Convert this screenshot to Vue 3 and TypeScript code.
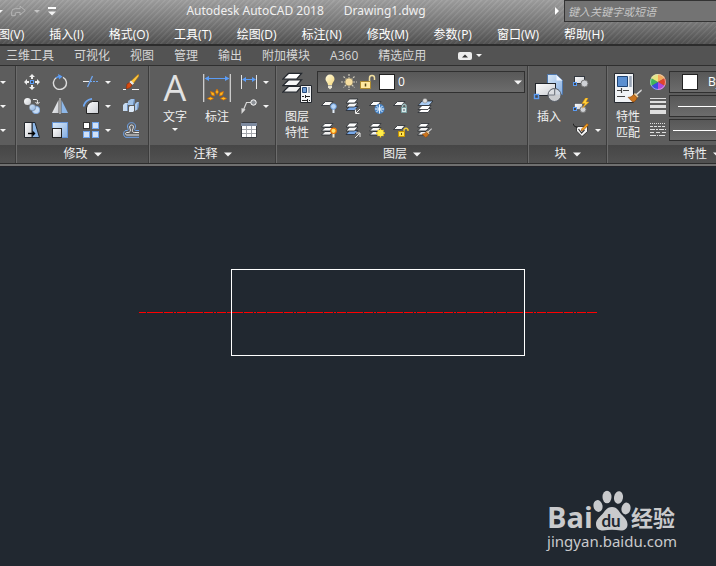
<script setup lang="ts">
import { ref } from 'vue'

interface Tool {
  icon: string
  label: string
  menu?: boolean
}

const menus: string[] = [
  '视图(V)', '插入(I)', '格式(O)', '工具(T)', '绘图(D)',
  '标注(N)', '修改(M)', '参数(P)', '窗口(W)', '帮助(H)',
]

const tabs: string[] = ['三维工具', '可视化', '视图', '管理', '输出', '附加模块', 'A360', '精选应用']

const modifyTools: Tool[] = [
  { icon: 'move', label: '移动' },
  { icon: 'rotate', label: '旋转' },
  { icon: 'trim', label: '修剪', menu: true },
  { icon: 'erase', label: '删除' },
  { icon: 'copy', label: '复制' },
  { icon: 'mirror', label: '镜像' },
  { icon: 'fillet', label: '圆角', menu: true },
  { icon: 'explode', label: '分解' },
  { icon: 'stretch', label: '拉伸' },
  { icon: 'scale', label: '缩放' },
  { icon: 'array', label: '阵列', menu: true },
  { icon: 'offset', label: '偏移' },
]

const noteTools: Tool[] = [
  { icon: 'linear', label: '线性', menu: true },
  { icon: 'leader', label: '引线', menu: true },
  { icon: 'table', label: '表格' },
]

const layerTools: Tool[] = [
  { icon: 'layer-off', label: '关闭' },
  { icon: 'layer-isolate', label: '隔离' },
  { icon: 'layer-freeze', label: '冻结' },
  { icon: 'layer-lock', label: '锁定' },
  { icon: 'layer-current', label: '置为当前' },
  { icon: 'layer-on', label: '打开所有图层' },
  { icon: 'layer-unisolate', label: '取消隔离' },
  { icon: 'layer-thaw', label: '解冻所有图层' },
  { icon: 'layer-unlock', label: '解锁' },
  { icon: 'layer-match', label: '匹配图层' },
]

const blockTools: Tool[] = [
  { icon: 'block-create', label: '创建' },
  { icon: 'block-edit', label: '编辑' },
  { icon: 'block-attr', label: '编辑属性', menu: true },
]

const search = ref('')
const layer = ref('0')
const color = ref('ByLayer')
</script>

<template>
  <div class="app">
    <svg class="sprite" aria-hidden="true">
      <defs>
        <linearGradient id="g-blue" x1="0" y1="0" x2="1" y2="1">
          <stop offset="0" stop-color="#dbe9f8" /><stop offset="1" stop-color="#86aee0" />
        </linearGradient>
        <linearGradient id="g-white" x1="0" y1="0" x2="1" y2="1">
          <stop offset="0" stop-color="#ffffff" /><stop offset="1" stop-color="#c9ccd2" />
        </linearGradient>
        <linearGradient id="g-bulb" x1="0" y1="0" x2="1" y2="1">
          <stop offset="0" stop-color="#fffbe0" /><stop offset="1" stop-color="#f5d77a" />
        </linearGradient>
      </defs>
      <symbol id="caret" viewBox="0 0 8 4"><path d="M0 0h8L4 4z" fill="#f4f4f4" /></symbol>
      <symbol id="move" viewBox="0 0 16 16">
        <path d="M8 0l3 3H9v2H7V3H5zM8 16l3-3H9v-2H7v2H5zM0 8l3-3v2h2v2H3v2zM16 8l-3-3v2h-2v2h2v2z" fill="#eee" />
        <rect x="6.500" y="6.500" width="3" height="3" fill="#3c4a5c" stroke="#5b9cf5" />
      </symbol>
      <symbol id="rotate" viewBox="0 0 16 16">
        <path d="M11 3.300A6.500 6.500 0 1 1 4.500 3.500" fill="none" stroke="#dcdcdc" stroke-width="1.400" />
        <path d="M4 4Q6 2 8.500 2.500" fill="none" stroke="#5b9cf5" stroke-width="1.500" />
        <path d="M6 0l4.500 2.500L7 5.500z" fill="#5b9cf5" />
      </symbol>
      <symbol id="trim" viewBox="0 0 16 16">
        <path d="M0 7.500h6" stroke="#ececec" />
        <path d="M7 7.500h9" stroke="#6fa6f0" stroke-dasharray="2 1" />
        <path d="M9.500 2L4.500 13" stroke="#6fa6f0" stroke-width="1.300" />
      </symbol>
      <symbol id="erase" viewBox="0 0 16 16">
        <path d="M0 15.500h3M9 15.500h7" stroke="#f4f4f4" />
        <path d="M15.500 0L16 2 10 10 7 8z" fill="#ffc940" stroke="#a36a10" stroke-width=".6" />
        <path d="M8 6.500l3 3-2 1.500-3-2.500z" fill="#e8e8e8" />
        <path d="M6.500 8.500l2.500 2.500c-1 3-4 3.500-6 3.500 1-1 .5-3.500 1-4.500z" fill="#d94d12" stroke="#8c2a05" stroke-width=".6" />
      </symbol>
      <symbol id="copy" viewBox="0 0 16 16">
        <circle cx="3.500" cy="3.500" r="3.500" fill="url(#g-white)" />
        <path d="M9 1.500h3.500q1 0 1 2v1.500M11.500 4l2 2.200 2-2.200" fill="none" stroke="#f0f0f0" />
        <circle cx="12" cy="12" r="3.800" fill="#c6dcf5" stroke="#7aa7e2" stroke-width=".8" />
        <circle cx="8.500" cy="9.500" r="3.200" fill="url(#g-blue)" stroke="#5e6a7a" stroke-width=".5" />
      </symbol>
      <symbol id="mirror" viewBox="0 0 16 16">
        <path d="M6.500 2v13H0z" fill="url(#g-white)" />
        <path d="M9.500 2v13H16z" fill="#8db7e8" />
        <path d="M8 0v16" stroke="#e4e4e4" />
      </symbol>
      <symbol id="fillet" viewBox="0 0 16 16">
        <path d="M3.500 15.500V10q1-5.500 6-6.500h6v12z" fill="url(#g-white)" stroke="#222" />
        <path d="M.5 8.500Q2 2 9 .8" fill="none" stroke="#6fa6f0" stroke-width="1.800" />
      </symbol>
      <symbol id="explode" viewBox="0 0 16 16">
        <path d="M5 3l3-2h4l-1 6H5z" fill="#9fc0e6" /><path d="M11 1l1 0-1 6-1 0z" fill="#5d82b4" />
        <path d="M0 7l2-2h3v7l-1 1H0z" fill="#c5daf1" /><path d="M4 7l1-2v7l-1 1z" fill="#6d92c4" />
        <path d="M6 9l1-1h4v5l-1 1H6z" fill="#dce9f8" />
        <path d="M12 6l2-2h2l-1 7-3 2z" fill="#a9c8ec" /><path d="M14.500 6L16 4l-1 7-1 .500z" fill="#6d92c4" />
      </symbol>
      <symbol id="stretch" viewBox="0 0 16 16">
        <path d="M8 .5h3l4.500 15H8z" fill="#8db7e8" stroke="#22262c" />
        <path d="M.5.5H8v15H.5z" fill="url(#g-white)" stroke="#22262c" />
        <path d="M4 11.500h6" stroke="#000" stroke-width="1.400" /><path d="M8.500 8.500l3 3-3 3z" />
      </symbol>
      <symbol id="scale" viewBox="0 0 16 16">
        <rect x=".5" y=".5" width="15" height="15" fill="url(#g-blue)" stroke="#6695d6" />
        <rect x=".5" y="6.500" width="9" height="9" fill="url(#g-white)" stroke="#222" />
      </symbol>
      <symbol id="array" viewBox="0 0 16 16">
        <rect x=".5" y=".5" width="6" height="6" fill="#fff" stroke="#333" />
        <g fill="#d1e2f8" stroke="#6fa6f0">
          <rect x="9.500" y=".5" width="6" height="6" /><rect x=".5" y="9.500" width="6" height="6" /><rect x="9.500" y="9.500" width="6" height="6" />
        </g>
      </symbol>
      <symbol id="offset" viewBox="0 0 16 16">
        <path d="M16 8.500h-3.500C11.500 8.500 11.500 7.500 12 6.500 13.500 2.500 11 .7 8.500.7S3.500 2.500 5 6.500c.5 1.500 0 2-1 2H3C0 8.500-.2 15 3 15.300h13" fill="none" stroke="#6fa6f0" />
        <path d="M16 10.500h-4.500c-2.500 0-2.500-2-1.500-4C11 4 10 3 8.700 3S6 4 7 6.500c1 2.500 0 4-2 4H4c-2 0-2 2.500 0 2.500h12" fill="none" stroke="#eee" />
      </symbol>
      <symbol id="dimension" viewBox="0 0 28 28">
        <path d="M.7 0v28M27.300 0v28" stroke="#d8d8d8" stroke-width="1.200" />
        <path d="M4 4.500h20" stroke="#5b9cf5" /><path d="M1.500 4.500L6 2v5zM26.500 4.500L22 2v5z" fill="#5b9cf5" />
        <g fill="#ffbd20" stroke="#d46a00" stroke-width=".7">
          <path d="M14 15l1.500 3L14 20.500 12.500 18zM7.500 17.500l3.500 1.200.5 3.300L8.500 21zM20.500 17.500L17 18.700l-.5 3.300 3-1zM4.500 24.500l3-1.500 3 1.500-3 1.500zM23.500 24.500l-3-1.500-3 1.500 3 1.500z" />
        </g>
      </symbol>
      <symbol id="linear" viewBox="0 0 16 16">
        <path d="M.5 1v14M15.500 1v14" stroke="#e4e4e4" />
        <path d="M3 5.500h10" stroke="#5b9cf5" /><path d="M1 5.500L5 3v5zM15 5.500L11 3v5z" fill="#5b9cf5" />
      </symbol>
      <symbol id="leader" viewBox="0 0 16 16">
        <path d="M10 4.500H5.500L2 13" fill="none" stroke="#d8d8d8" stroke-width="1.200" />
        <path d="M.5 10l4 1.500L.5 16z" fill="#d8d8d8" />
        <circle cx="12.500" cy="4.500" r="2.700" fill="#8c9096" stroke="#fff" />
      </symbol>
      <symbol id="table" viewBox="0 0 16 16">
        <path d="M.5.5h15v15H.5z" fill="#fff" stroke="#3a3d42" /><path d="M0 1h16v3H0z" fill="#7e8ba0" />
        <path d="M1 7.500h14M1 11.500h14M5.500 4v11M10.500 4v11" stroke="#a4a7ad" />
      </symbol>
      <symbol id="sheets" viewBox="0 0 16 16">
        <g stroke="#24282e" stroke-width=".8">
          <path d="M.5 13L4 9.500h8L9 13z" fill="#f0f0f0" /><path d="M.5 9L4 5.500h8L9 9z" fill="#f6f6f6" /><path d="M.5 5L4 1.500h8L9 5z" fill="#fff" />
        </g>
      </symbol>
      <symbol id="sheets-blue" viewBox="0 0 16 16">
        <g stroke="#24282e" stroke-width=".8">
          <path d="M1 12.500L4.500 8.500H13L9.500 12.500z" fill="#78a8e8" /><path d="M1 9L4.500 5H13L9.500 9z" fill="#f6f6f6" /><path d="M1 5L4.500 1H13L9.500 5z" fill="#fff" />
        </g>
      </symbol>
      <symbol id="sheet" viewBox="0 0 16 16"><path d="M.5 7.500L4.500 3.500H12L8.500 7.500z" fill="#f8f8f8" stroke="#24282e" stroke-width=".8" /></symbol>
      <symbol id="layer-off" viewBox="0 0 16 16">
        <use href="#sheet" /><path d="M12.500 10v5" stroke="#e4eefa" stroke-width="2" /><circle cx="12.500" cy="8.500" r="2.800" fill="#bcd7f5" stroke="#5f98e0" stroke-width=".9" />
      </symbol>
      <symbol id="layer-on" viewBox="0 0 16 16">
        <use href="#sheets" /><path d="M12.500 10.500v5" stroke="#f3ead2" stroke-width="2" /><circle cx="12.500" cy="8.800" r="2.700" fill="#ffe36b" stroke="#f07800" stroke-width="1.200" />
      </symbol>
      <symbol id="layer-isolate" viewBox="0 0 16 16"><use href="#sheets-blue" /><path d="M15 11l-4 4M10.500 11.500v4h4" fill="none" stroke="#eee" /></symbol>
      <symbol id="layer-unisolate" viewBox="0 0 16 16"><use href="#sheets-blue" /><path d="M10 16l4.500-4.500M11 11h4v4" fill="none" stroke="#eee" /></symbol>
      <symbol id="layer-freeze" viewBox="0 0 16 16">
        <use href="#sheet" /><circle cx="10.500" cy="11" r="5" fill="#4c86c6" /><path d="M10.500 6.500v9M6 11h9M7.500 8l6 6M13.500 8l-6 6" stroke="#eaf5ff" />
      </symbol>
      <symbol id="layer-thaw" viewBox="0 0 16 16">
        <use href="#sheets" /><path d="M11.500 6.500v9M7 11h9M8.500 8l6 6M14.500 8l-6 6" stroke="#f7c51a" stroke-width="1.300" /><circle cx="11.500" cy="11" r="3.200" fill="#ffed48" />
      </symbol>
      <symbol id="layer-lock" viewBox="0 0 16 16">
        <use href="#sheet" /><path d="M9.500 10V7.500q1.700-2.500 3.500 0V10" fill="none" stroke="#9fbfc0" stroke-width="1.300" /><path d="M8.500 9.500h5v5h-5z" fill="#d9e8e8" stroke="#7ba3a5" /><path d="M11 11v2" stroke="#456" />
      </symbol>
      <symbol id="layer-unlock" viewBox="0 0 16 16">
        <use href="#sheet" /><path d="M11 10V7.500q2-2.500 4 0v1.500" fill="none" stroke="#f3cf35" stroke-width="1.300" /><path d="M5.500 9.500h6v5h-6z" fill="#ffe24c" stroke="#c79500" /><path d="M8.500 11v2" stroke="#6a4900" />
      </symbol>
      <symbol id="layer-current" viewBox="0 0 16 16">
        <g stroke="#24282e" stroke-width=".8">
          <path d="M1 14.500L5 10.500h9l-3 4z" fill="#fff" /><path d="M1 11.500L5 7.500h9l-3 4z" fill="#fff" /><path d="M1 7.500L5 3h11l-4 4.500z" fill="#a9cdf6" />
        </g><circle cx="8" cy="2.800" r="2.300" fill="#dedede" stroke="#777" stroke-width=".5" />
      </symbol>
      <symbol id="brush" viewBox="0 0 16 16">
        <path d="M15.500 0L16 2 10 7.500 8.500 6z" fill="#e8e8e8" stroke="#555" stroke-width=".5" />
        <path d="M8 4.500l4 4-1.500 1.500-4-4z" fill="#f2d2a0" />
        <path d="M6.500 6l4 4c-1 3-3 4.500-5 5L0 9.500C2 9.500 4.500 9 6.500 6z" fill="#c9731d" stroke="#7b3b05" stroke-width=".6" />
      </symbol>
      <symbol id="layer-match" viewBox="0 0 16 16"><use href="#sheets" /><use href="#brush" x="5" y="6" width="10" height="10" /></symbol>
      <symbol id="layer-props" viewBox="0 0 32 32">
        <use href="#sheets" x="1" y="-1" width="26" height="26" />
        <path d="M19.500 13.500h11v17h-11z" fill="#f4f5f7" stroke="#23272d" />
        <path d="M21.500 15.500h4v5h-4z" fill="#6d9bd3" stroke="#264a7a" /><path d="M28 15v6" stroke="#8b98aa" stroke-width="1.500" />
        <path d="M21 24.500h2M25 24.500h4M21 28.500h5M28 28.500h1M24.500 23v3M26.500 27v3" stroke="#222" />
      </symbol>
      <symbol id="block-insert" viewBox="0 0 32 32">
        <path d="M14.500 2.500h9l6 6v14h-15z" fill="url(#g-blue)" stroke="#4f78ad" /><path d="M23.500 3v5.500h6z" fill="#f4f8ff" />
        <rect x="2.500" y="11.500" width="20" height="12" fill="url(#g-white)" stroke="#22262c" />
        <circle cx="21.500" cy="23" r="6.500" fill="#dcdee2" fill-opacity=".85" stroke="#555b64" /><path d="M21.500 17v6H15" fill="none" stroke="#777d86" />
        <rect x="1.500" y="22.500" width="4" height="4" fill="#444a52" stroke="#5b9cf5" stroke-width="1.400" />
      </symbol>
      <symbol id="block-create" viewBox="0 0 16 16">
        <rect x="1.500" y="2.500" width="10" height="7" fill="url(#g-white)" stroke="#33383f" /><circle cx="11.500" cy="9.500" r="3.500" fill="#cfd1d5" stroke="#777" />
        <rect x=".5" y="8.500" width="3" height="3" fill="#444" stroke="#5b9cf5" />
      </symbol>
      <symbol id="block-edit" viewBox="0 0 16 16">
        <rect x="1.500" y="5.500" width="8" height="6" fill="url(#g-white)" stroke="#4a4f56" stroke-width=".6" /><circle cx="10" cy="11.500" r="3" fill="#cfd1d5" stroke="#777" />
        <rect x=".5" y="9.500" width="3" height="3" fill="#444" stroke="#5b9cf5" /><path d="M12.500 0L9 5.500h3L9.500 10 16 4h-3l2-4z" fill="#ffd23c" stroke="#e08a00" stroke-width=".5" />
      </symbol>
      <symbol id="block-attr" viewBox="0 0 16 16">
        <path d="M3.500 4.500h11v5L9 14.500 3.500 9z" fill="#f6f6f6" stroke="#222" stroke-width=".8" /><path d="M0 1.500q.5 3.500 4.500 4" fill="none" stroke="#222" />
        <path d="M5.500 7l3 4 3-3" fill="none" stroke="#333" stroke-width="1.200" /><path d="M14 1.500l1.500 1.500-5 5-2.500 1 1-2.500z" fill="#f5a623" stroke="#8b3e08" stroke-width=".6" />
      </symbol>
      <symbol id="match-props" viewBox="0 0 32 32">
        <path d="M2.500 1.500h19v29h-19z" fill="#f1f3f6" stroke="#25292f" />
        <path d="M5.500 4.500h10v10h-10z" fill="#5b8fd0" stroke="#1f4474" /><path d="M18.500 4v11" stroke="#97a3b4" stroke-width="2.500" />
        <path d="M5 18.500h4M11 18.500h6M5 24.500h8M9.500 16v5" stroke="#444" stroke-width="1.200" />
        <use href="#brush" x="15" y="17" width="16" height="14" />
      </symbol>
      <symbol id="wheel" viewBox="0 0 16 16">
        <path d="M8 8V0a8 8 0 0 1 7 4z" fill="#f6a95c" /><path d="M8 8l7-4a8 8 0 0 1 0 8z" fill="#e2452c" /><path d="M8 8l7 4a8 8 0 0 1-7 4z" fill="#b548d8" />
        <path d="M8 8v8a8 8 0 0 1-7-4z" fill="#3a4be0" /><path d="M8 8l-7 4a8 8 0 0 1 0-8z" fill="#3fb65a" /><path d="M8 8L1 4a8 8 0 0 1 7-4z" fill="#e6e680" />
        <circle cx="8" cy="8" r="7.500" fill="none" stroke="#ddd" stroke-opacity=".6" />
      </symbol>
      <symbol id="weights" viewBox="0 0 16 16"><path d="M0 0h16v1H0zM0 3h16v2H0zM0 7h16v3H0zM0 12h16v4H0z" fill="#dedede" /></symbol>
      <symbol id="linetypes" viewBox="0 0 16 16">
        <g stroke="#dedede"><path d="M0 1.500h16" stroke-dasharray="1 1" /><path d="M0 4.500h16" stroke-dasharray="3 1" /><path d="M0 7.500h16" stroke-dasharray="5 1 2 1" /><path d="M0 10.500h16" stroke-dasharray="4 2" /><path d="M0 13.500h16" stroke-dasharray="6 1 1 1" /></g>
      </symbol>
      <symbol id="bulb" viewBox="0 0 16 16">
        <path d="M8 .5a4.500 4.500 0 0 1 4.500 4.700C12.500 7.500 10 8.500 10 11H6C6 8.500 3.500 7.500 3.500 5.200A4.500 4.500 0 0 1 8 .5z" fill="url(#g-bulb)" /><path d="M6 11.500h4v2l-2 2-2-2z" fill="#e9e4d0" />
      </symbol>
      <symbol id="sun" viewBox="0 0 16 16">
        <path d="M8 0v16M0 8h16M2.500 2.500l11 11M13.500 2.500l-11 11" stroke="#cfcabb" stroke-width="1.200" stroke-dasharray="2 1" /><circle cx="8" cy="8" r="4" fill="#f8dfa0" stroke="#77705c" stroke-width=".6" />
      </symbol>
      <symbol id="unlocked" viewBox="0 0 16 16">
        <path d="M9.500 8V4q0-2.500 2.500-2.500T14.500 4v2" fill="none" stroke="#f1dfa0" stroke-width="1.500" /><path d="M.5 7.500h10v7H.5z" fill="#ffe9a0" stroke="#ad8a30" /><path d="M5.500 9.500v3" stroke="#5e4a15" stroke-width="1.500" />
      </symbol>
      <symbol id="redo" viewBox="0 0 16 12">
        <path d="M.7 11V7q0-3.500 4-3.500h5V.8l5.500 4.700-5.500 4.700V7.500H6Q4.500 7.500 4.500 9v2z" fill="#8c8c8c" stroke="#bcbcbc" stroke-width=".9" />
      </symbol>
    </svg>

    <header class="frame">
      <div class="title-row">
        <div class="quick">
          <button class="plain" type="button" aria-label="放弃列表"><svg class="caret-s"><use href="#caret" /></svg></button>
          <button class="plain" type="button" aria-label="重做"><svg class="redo"><use href="#redo" /></svg></button>
          <button class="plain dim" type="button" aria-label="重做列表"><svg class="caret-s"><use href="#caret" /></svg></button>
          <button class="plain custom" type="button" aria-label="自定义快速访问工具栏"><svg class="caret-l"><use href="#caret" /></svg></button>
        </div>
        <h1 class="title"><span>Autodesk AutoCAD 2018</span><span>Drawing1.dwg</span></h1>
        <button class="plain" type="button" aria-label="展开搜索"><svg class="play" viewBox="0 0 4 8"><path d="M0 0l4 4-4 4z" fill="#fff" /></svg></button>
        <input v-model="search" class="search" type="text" aria-label="搜索" placeholder="键入关键字或短语" />
      </div>
      <nav class="menus" aria-label="菜单栏">
        <button v-for="m in menus" :key="m" class="plain" type="button">{{ m }}</button>
      </nav>
    </header>

    <nav class="tabs" aria-label="功能区选项卡">
      <button v-for="t in tabs" :key="t" class="plain" type="button">{{ t }}</button>
      <button class="plain minimise" type="button" aria-label="最小化功能区">
        <svg class="pill" viewBox="0 0 14 8"><rect width="14" height="8" rx="2" fill="#ececec" /><path d="M4 5.500h6L7 2.500z" fill="#333" /></svg>
        <svg class="caret-s"><use href="#caret" /></svg>
      </button>
    </nav>

    <div class="ribbon">
      <section class="panel cut">
        <div class="body carets">
          <button v-for="n in 3" :key="n" class="plain" type="button" aria-label="更多绘图工具"><svg class="caret-s"><use href="#caret" /></svg></button>
        </div>
        <div class="caption"></div>
      </section>

      <section class="panel modify">
        <div class="body modify-grid">
          <button v-for="t in modifyTools" :key="t.icon" class="plain tool" type="button" :aria-label="t.label">
            <svg class="icon"><use :href="'#' + t.icon" /></svg>
            <svg v-if="t.menu" class="caret-s"><use href="#caret" /></svg>
          </button>
        </div>
        <button class="plain caption" type="button">修改<svg class="caret-l"><use href="#caret" /></svg></button>
      </section>

      <section class="panel note">
        <div class="body">
          <button class="plain big text-tool" type="button">
            <span class="glyph">A</span><span>文字</span><svg class="caret-s"><use href="#caret" /></svg>
          </button>
          <button class="plain big dim-tool" type="button">
            <svg class="icon-big"><use href="#dimension" width="28" height="28" x="2" y="2" /></svg><span>标注</span>
          </button>
          <div class="stack">
            <button v-for="t in noteTools" :key="t.icon" class="plain tool" type="button" :aria-label="t.label">
              <svg class="icon"><use :href="'#' + t.icon" /></svg>
              <svg v-if="t.menu" class="caret-s"><use href="#caret" /></svg>
            </button>
          </div>
        </div>
        <button class="plain caption" type="button">注释<svg class="caret-l"><use href="#caret" /></svg></button>
      </section>

      <section class="panel layers">
        <div class="body">
          <button class="plain big" type="button">
            <svg class="icon-big"><use href="#layer-props" /></svg><span>图层</span><span>特性</span>
          </button>
          <div class="layer-tools">
            <div class="field layer-field">
              <svg class="icon"><use href="#bulb" /></svg>
              <svg class="icon"><use href="#sun" /></svg>
              <svg class="icon"><use href="#unlocked" /></svg>
              <span class="swatch"></span>
              <select v-model="layer" aria-label="图层"><option>0</option></select>
              <svg class="caret-l"><use href="#caret" /></svg>
            </div>
            <div class="layer-grid">
              <button v-for="t in layerTools" :key="t.icon" class="plain tool" type="button" :aria-label="t.label">
                <svg class="icon"><use :href="'#' + t.icon" /></svg>
              </button>
            </div>
          </div>
        </div>
        <button class="plain caption" type="button">图层<svg class="caret-l"><use href="#caret" /></svg></button>
      </section>

      <section class="panel block">
        <div class="body">
          <button class="plain big" type="button">
            <svg class="icon-big"><use href="#block-insert" /></svg><span>插入</span>
          </button>
          <div class="stack">
            <button v-for="t in blockTools" :key="t.icon" class="plain tool" type="button" :aria-label="t.label">
              <svg class="icon"><use :href="'#' + t.icon" /></svg>
              <svg v-if="t.menu" class="caret-s"><use href="#caret" /></svg>
            </button>
          </div>
        </div>
        <button class="plain caption" type="button">块<svg class="caret-l"><use href="#caret" /></svg></button>
      </section>

      <section class="panel props">
        <div class="body">
          <button class="plain big" type="button">
            <svg class="icon-big"><use href="#match-props" /></svg><span>特性</span><span>匹配</span>
          </button>
          <div class="prop-rows">
            <svg class="icon"><use href="#wheel" /></svg>
            <div class="field color-field">
              <span class="swatch"></span>
              <select v-model="color" aria-label="对象颜色"><option>ByLayer</option></select>
            </div>
            <svg class="icon"><use href="#weights" /></svg>
            <div class="field"><select class="rule short" aria-label="线宽"><option></option></select></div>
            <svg class="icon"><use href="#linetypes" /></svg>
            <div class="field"><select class="rule" aria-label="线型"><option></option></select></div>
          </div>
        </div>
        <button class="plain caption" type="button">特性<svg class="caret-l"><use href="#caret" /></svg></button>
      </section>
    </div>

    <main class="canvas">
      <svg class="drawing" role="img" aria-label="矩形与中心线">
        <path d="M139 145.500H597" stroke="#ff0000" stroke-dasharray="16 1 9 1 2 1 9 1" stroke-dashoffset="32" />
        <rect x="231.500" y="102.500" width="293" height="86" fill="none" stroke="#ffffff" />
      </svg>
      <div class="mark">
        <div class="brand">
          <span class="bai">Bai</span>
          <svg class="paw" viewBox="0 0 38 42">
            <g fill="#c9cacc">
              <ellipse cx="5" cy="16" rx="4.500" ry="6" transform="rotate(-12 5 16)" /><ellipse cx="14" cy="7" rx="4.500" ry="6.300" />
              <ellipse cx="25.500" cy="7.500" rx="4.500" ry="6.300" transform="rotate(10 25.500 7.500)" /><ellipse cx="33" cy="18.500" rx="4.500" ry="6" transform="rotate(12 33 18.500)" />
              <path d="M19 17c5 0 6.500 4 9.500 7.500 3 3 6 5.500 6 10 0 4-3 6-6.500 6-3 0-6-.7-9-.7s-6 .7-9 .7c-4 0-7-2-7-6.500 0-4 3-6.500 6-9.500 3-3.500 5-7.500 10-7.500z" />
            </g>
            <text x="18" y="37" text-anchor="middle" font-family="Lato, sans-serif" font-weight="700" font-size="17" fill="#212830">du</text>
          </svg>
          <span class="jy">经验</span>
        </div>
        <div class="url">jingyan.baidu.com</div>
      </div>
    </main>
  </div>
</template>

<style>
body {
  background: #212830;
}
</style>

<style scoped>
.app {
  display: flex;
  flex-direction: column;
  min-height: 100vh;
  overflow: hidden;
  font: 12px/16px "Open Sans", "Noto Sans CJK SC", sans-serif;
  color: #f0f0f0;
}
.app svg {
  display: block;
  flex: none;
}
.app .sprite {
  position: absolute;
  width: 0;
  height: 0;
}
.plain {
  display: flex;
  flex: none;
  align-items: center;
  padding: 0;
  border: 0;
  background: none;
  color: inherit;
  font: inherit;
  white-space: nowrap;
}
.caret-s {
  width: 6px;
  height: 3px;
}
.caret-l {
  width: 8px;
  height: 5px;
}
.icon {
  width: 16px;
  height: 16px;
}
.icon-big {
  width: 32px;
  height: 32px;
}
.frame {
  border-bottom: 2px solid #2c2c2c;
  background:
    repeating-linear-gradient(135deg, rgba(255, 255, 255, 0.05) 0 1px, rgba(0, 0, 0, 0.03) 2px 4px),
    linear-gradient(#a0a0a0, #7c7c7c 50%, #525252);
}
.title-row {
  display: flex;
  align-items: center;
  height: 22px;
}
.quick {
  display: flex;
  align-items: center;
  width: 60px;
  margin-left: -3px;
  gap: 8px;
}
.quick .dim {
  opacity: 0.55;
}
.redo {
  width: 15px;
  height: 12px;
}
.custom {
  padding-top: 2px;
  border-top: 2px solid #fff;
}
.title {
  display: flex;
  flex: 1;
  justify-content: center;
  gap: 20px;
  margin: 0;
  font: 12px/24px "Noto Sans", sans-serif;
}
.play {
  width: 4px;
  height: 8px;
  margin-right: 5px;
}
.search {
  box-sizing: border-box;
  width: 152px;
  height: 22px;
  padding: 0 3px;
  border: 1px solid #333;
  border-right: 0;
  border-radius: 0;
  background: #737373;
  color: #eee;
  font: italic 11px "Open Sans", "Noto Sans CJK SC", sans-serif;
}
.search::placeholder {
  color: #c6c6c6;
}
.menus {
  display: flex;
  align-items: center;
  gap: 25px;
  height: 19px;
  margin-left: -14px;
  padding-top: 3px;
  color: #fff;
}
.tabs {
  display: flex;
  align-items: center;
  gap: 20px;
  height: 19px;
  padding: 0 6px;
  border-bottom: 1px solid #2f2f2f;
  background: #535353;
  color: #d6d6d6;
}
.minimise {
  gap: 4px;
  margin-left: 12px;
}
.pill {
  width: 14px;
  height: 8px;
}
.ribbon {
  display: flex;
  border-bottom: 1px solid #2c2c2c;
  background: #5d5d5d;
  box-shadow: 0 2px #707070, 0 3px #24242a;
  position: relative;
}
.panel {
  display: flex;
  flex: none;
  flex-direction: column;
  box-sizing: border-box;
  border-right: 1px solid #3c3c3c;
  border-left: 1px solid #6c6c6c;
}
.cut {
  width: 16px;
  border-left: 0;
}
.modify {
  width: 133px;
}
.note {
  width: 127px;
}
.layers {
  width: 252px;
}
.block {
  width: 79px;
}
.props {
  width: 190px;
}
.body {
  display: flex;
  height: 72px;
  padding: 4px 0 3px;
}
.caption {
  justify-content: center;
  gap: 6px;
  height: 18px;
  background: linear-gradient(#464646, #515151);
}
.carets {
  display: grid;
  grid-template-rows: repeat(3, 24px);
}
.modify-grid {
  display: grid;
  grid-template: repeat(3, 24px) / 30px 26px 48px 20px;
}
.tool {
  justify-content: center;
  gap: 6px;
  height: 24px;
}
.stack .tool {
  justify-content: flex-start;
}
.big {
  flex-direction: column;
  width: 40px;
  padding-top: 2px;
}
.big span {
  height: 16px;
  line-height: 16px;
}
.big .icon-big,
.big .glyph {
  margin-bottom: 5px;
}
.big .glyph {
  height: 32px;
  font: 36px/32px "Open Sans", sans-serif;
  color: #e2e2e2;
}
.text-tool {
  width: 50px;
}
.text-tool .caret-s {
  margin-top: 3px;
}
.dim-tool {
  width: 34px;
}
.stack {
  padding-left: 7px;
}
.block .stack {
  padding-left: 4px;
}
.field {
  display: flex;
  align-items: center;
  box-sizing: border-box;
  height: 22px;
  margin: 1px 0;
  border: 1px solid #303030;
  background: linear-gradient(#585858, #6c6c6c);
}
.field select {
  flex: 1;
  min-width: 0;
  height: 20px;
  padding: 0;
  border: 0;
  appearance: none;
  background: none;
  color: #fff;
  font: inherit;
}
.swatch {
  flex: none;
  box-sizing: border-box;
  width: 16px;
  height: 16px;
  border: 1px solid #222;
  background: #fff;
}
.layer-field {
  width: 208px;
  gap: 3px;
  padding: 0 2px 0 4px;
}
.layer-grid {
  display: grid;
  grid-template: repeat(2, 24px) / repeat(5, 24px);
}
.prop-rows {
  display: grid;
  grid-template: repeat(3, 24px) / 19px 140px;
  align-items: center;
  padding-left: 2px;
}
.color-field {
  gap: 10px;
  padding-left: 12px;
}
.field .rule {
  margin-left: 3px;
  background: linear-gradient(#fff, #fff) center / 100% 1px no-repeat;
}
.field .short {
  margin-left: 8px;
}
.canvas {
  position: relative;
  display: flex;
  flex: 1;
  margin-top: 3px;
  background: #212830;
}
.drawing {
  width: 100%;
  height: auto;
  min-height: 380px;
}
.mark {
  position: absolute;
  right: 39px;
  bottom: 16px;
  color: #c9cacc;
}
.brand {
  display: flex;
  align-items: flex-end;
  height: 42px;
}
.bai {
  font: 700 29px/30px "Open Sans", sans-serif;
}
.paw {
  width: 38px;
  height: 42px;
}
.jy {
  font: 700 22px/32px "Noto Sans CJK SC", sans-serif;
}
.url {
  font: 15px/18px "Noto Sans", sans-serif;
}
</style>
